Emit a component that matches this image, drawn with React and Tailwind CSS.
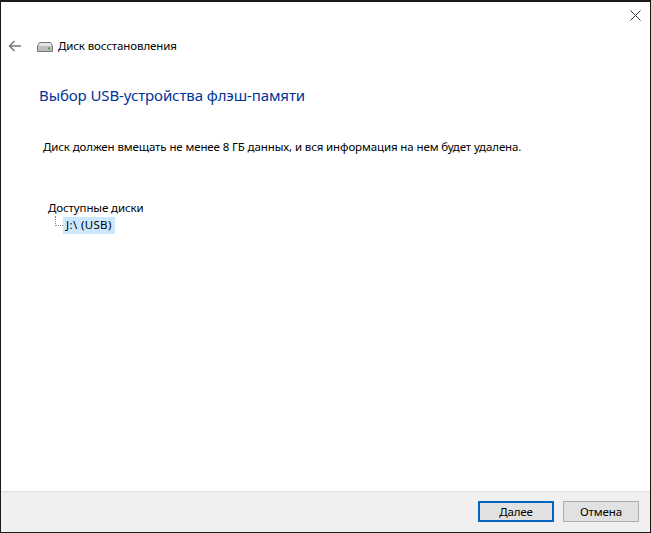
export default function App() {
  return (
    <div className="w-[651px] h-[533px] bg-white border border-[#1a1a1a] border-t-2 flex flex-col overflow-hidden text-[11.5px] tracking-[-0.11px] leading-[16px] text-black" style={{ fontFamily: '"Noto Sans", "Open Sans", sans-serif' }}>
      <div className="flex justify-end h-[27px] shrink-0">
        <svg width="11" height="11" viewBox="0 0 11 11" className="mt-[8px] mr-[9px]" fill="none" stroke="#333" strokeWidth="1">
          <path d="M0.5 0.5L10.5 10.5M10.5 0.5L0.5 10.5" />
        </svg>
      </div>
      <div className="flex items-center h-[34px] shrink-0 pb-[1px]">
        <svg width="14" height="12" viewBox="0 0 14 12" className="ml-[7px]" fill="none" stroke="#777" strokeWidth="1.5">
          <path d="M13 6H1.5M6.5 1L1.5 6L6.5 11" />
        </svg>
        <svg width="16" height="12" viewBox="0 0 16 12" className="ml-[15px] mt-[3px]">
          <path d="M2.5 1.5H13.5L15.5 5V10.5H0.5V5Z" fill="#e4e4e4" stroke="#777" />
          <rect x="1" y="5" width="14" height="5" fill="#bdbdbd" />
          <rect x="11" y="6.5" width="2" height="2" fill="#55a044" />
        </svg>
        <span className="ml-[5px]">Диск восстановления</span>
      </div>
      <div className="ml-[38px] mt-[22px] text-[15px] tracking-[-0.1px] leading-[20px] text-[#003399]">Выбор USB-устройства флэш-памяти</div>
      <div className="ml-[42px] mt-[34px]">Диск должен вмещать не менее 8 ГБ данных, и вся информация на нем будет удалена.</div>
      <div className="ml-[47px] mt-[45px]">Доступные диски</div>
      <div className="ml-[54px] flex items-start mt-[2px]">
        <div className="w-[8px] h-[10px] -mt-[2px] border-l border-b border-dotted border-[#888]" />
        <div className="bg-[#cce8ff] h-[17px] w-[52px] pl-[3px] -mt-[1px] tracking-[0.35px]">J:\ (USB)</div>
      </div>
      <div className="mt-auto h-[41px] shrink-0 bg-[#f0f0f0] border-t border-[#dfdfdf] flex justify-end items-start gap-[9px] pt-[9px] pr-[11px]">
        <button className="w-[76px] h-[21px] bg-[#e1e1e1] border-2 border-[#0067c0] flex items-center justify-center">Далее</button>
        <button className="w-[76px] h-[21px] bg-[#e1e1e1] border border-[#adadad] flex items-center justify-center">Отмена</button>
      </div>
    </div>
  );
}
